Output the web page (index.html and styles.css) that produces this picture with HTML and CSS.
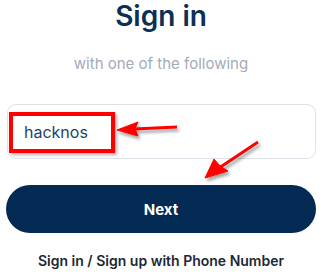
FILE: index.html
```html
<!DOCTYPE html>
<html lang="en">
<head>
    <meta charset="UTF-8">
    <meta name="viewport" content="width=device-width, initial-scale=1.0">
    <title>Sign in</title>
    <link rel="stylesheet" href="styles.css">
</head>
<body>
    <div class="page">
        <h1 class="title">Sign in</h1>
        <p class="subtitle">with one of the following</p>
        <div class="field">
            <span class="field-value">hacknos</span>
            <div class="highlight"></div>
        </div>
        <button class="next-button">Next</button>
        <p class="phone-link">Sign in / Sign up with Phone Number</p>

        <!-- annotation arrows -->
        <svg class="arrows" width="323" height="278" viewBox="0 0 323 278">
            <defs>
                <filter id="shadow" x="-20%" y="-20%" width="140%" height="140%">
                    <feDropShadow dx="2" dy="3" stdDeviation="1.5" flood-color="#000" flood-opacity="0.35"/>
                </filter>
            </defs>
            <g filter="url(#shadow)" fill="#ff0000" stroke="#ff0000">
                <line x1="177" y1="127" x2="134" y2="129" stroke-width="3"/>
                <polygon points="117,130 138,122 135,129 138,136" stroke-width="1" stroke-linejoin="round"/>
                <line x1="258" y1="142" x2="219" y2="168" stroke-width="3"/>
                <polygon points="205,178 214,159 220,166 228,171" stroke-width="1" stroke-linejoin="round"/>
            </g>
        </svg>
    </div>
</body>
</html>
```

FILE: styles.css
```css
body {
    margin: 0;
    padding: 0;
    background: #fff;
    font-family: Inter, "Noto Sans", sans-serif;
}

.page {
    position: relative;
    width: 323px;
    height: 278px;
    padding: 0 7px 0 6px;
    box-sizing: border-box;
    display: flex;
    flex-direction: column;
    align-items: stretch;
    text-align: center;
}

.title {
    margin: 0;
    font-size: 28px;
    line-height: 32px;
    font-weight: 600;
    color: #0b2f55;
}

.subtitle {
    margin: 22px 0 0;
    font-size: 15px;
    line-height: 20px;
    color: #a3abb8;
}

.field {
    position: relative;
    margin: 30px 0 0 1px;
    height: 55px;
    border: 1px solid #dde2e8;
    border-radius: 9px;
    box-sizing: border-box;
    display: flex;
    align-items: center;
    padding-left: 16px;
}

.field-value {
    font-size: 16px;
    color: #1d3f70;
}

.highlight {
    position: absolute;
    left: 1px;
    top: 7px;
    width: 106px;
    height: 41px;
    border: 4px solid #ff0000;
    box-sizing: border-box;
    box-shadow: 2px 2px 3px rgba(0, 0, 0, 0.3);
}

.next-button {
    margin-top: 26px;
    height: 48px;
    border: none;
    border-radius: 24px;
    background: #022a53;
    color: #fff;
    font-family: Inter, "Noto Sans", sans-serif;
    font-size: 15px;
    font-weight: 700;
}

.phone-link {
    margin: 19px 0 0;
    font-size: 14px;
    line-height: 18px;
    font-weight: 600;
    color: #1d2735;
}

.arrows {
    position: absolute;
    left: 0;
    top: 0;
    pointer-events: none;
}
```
